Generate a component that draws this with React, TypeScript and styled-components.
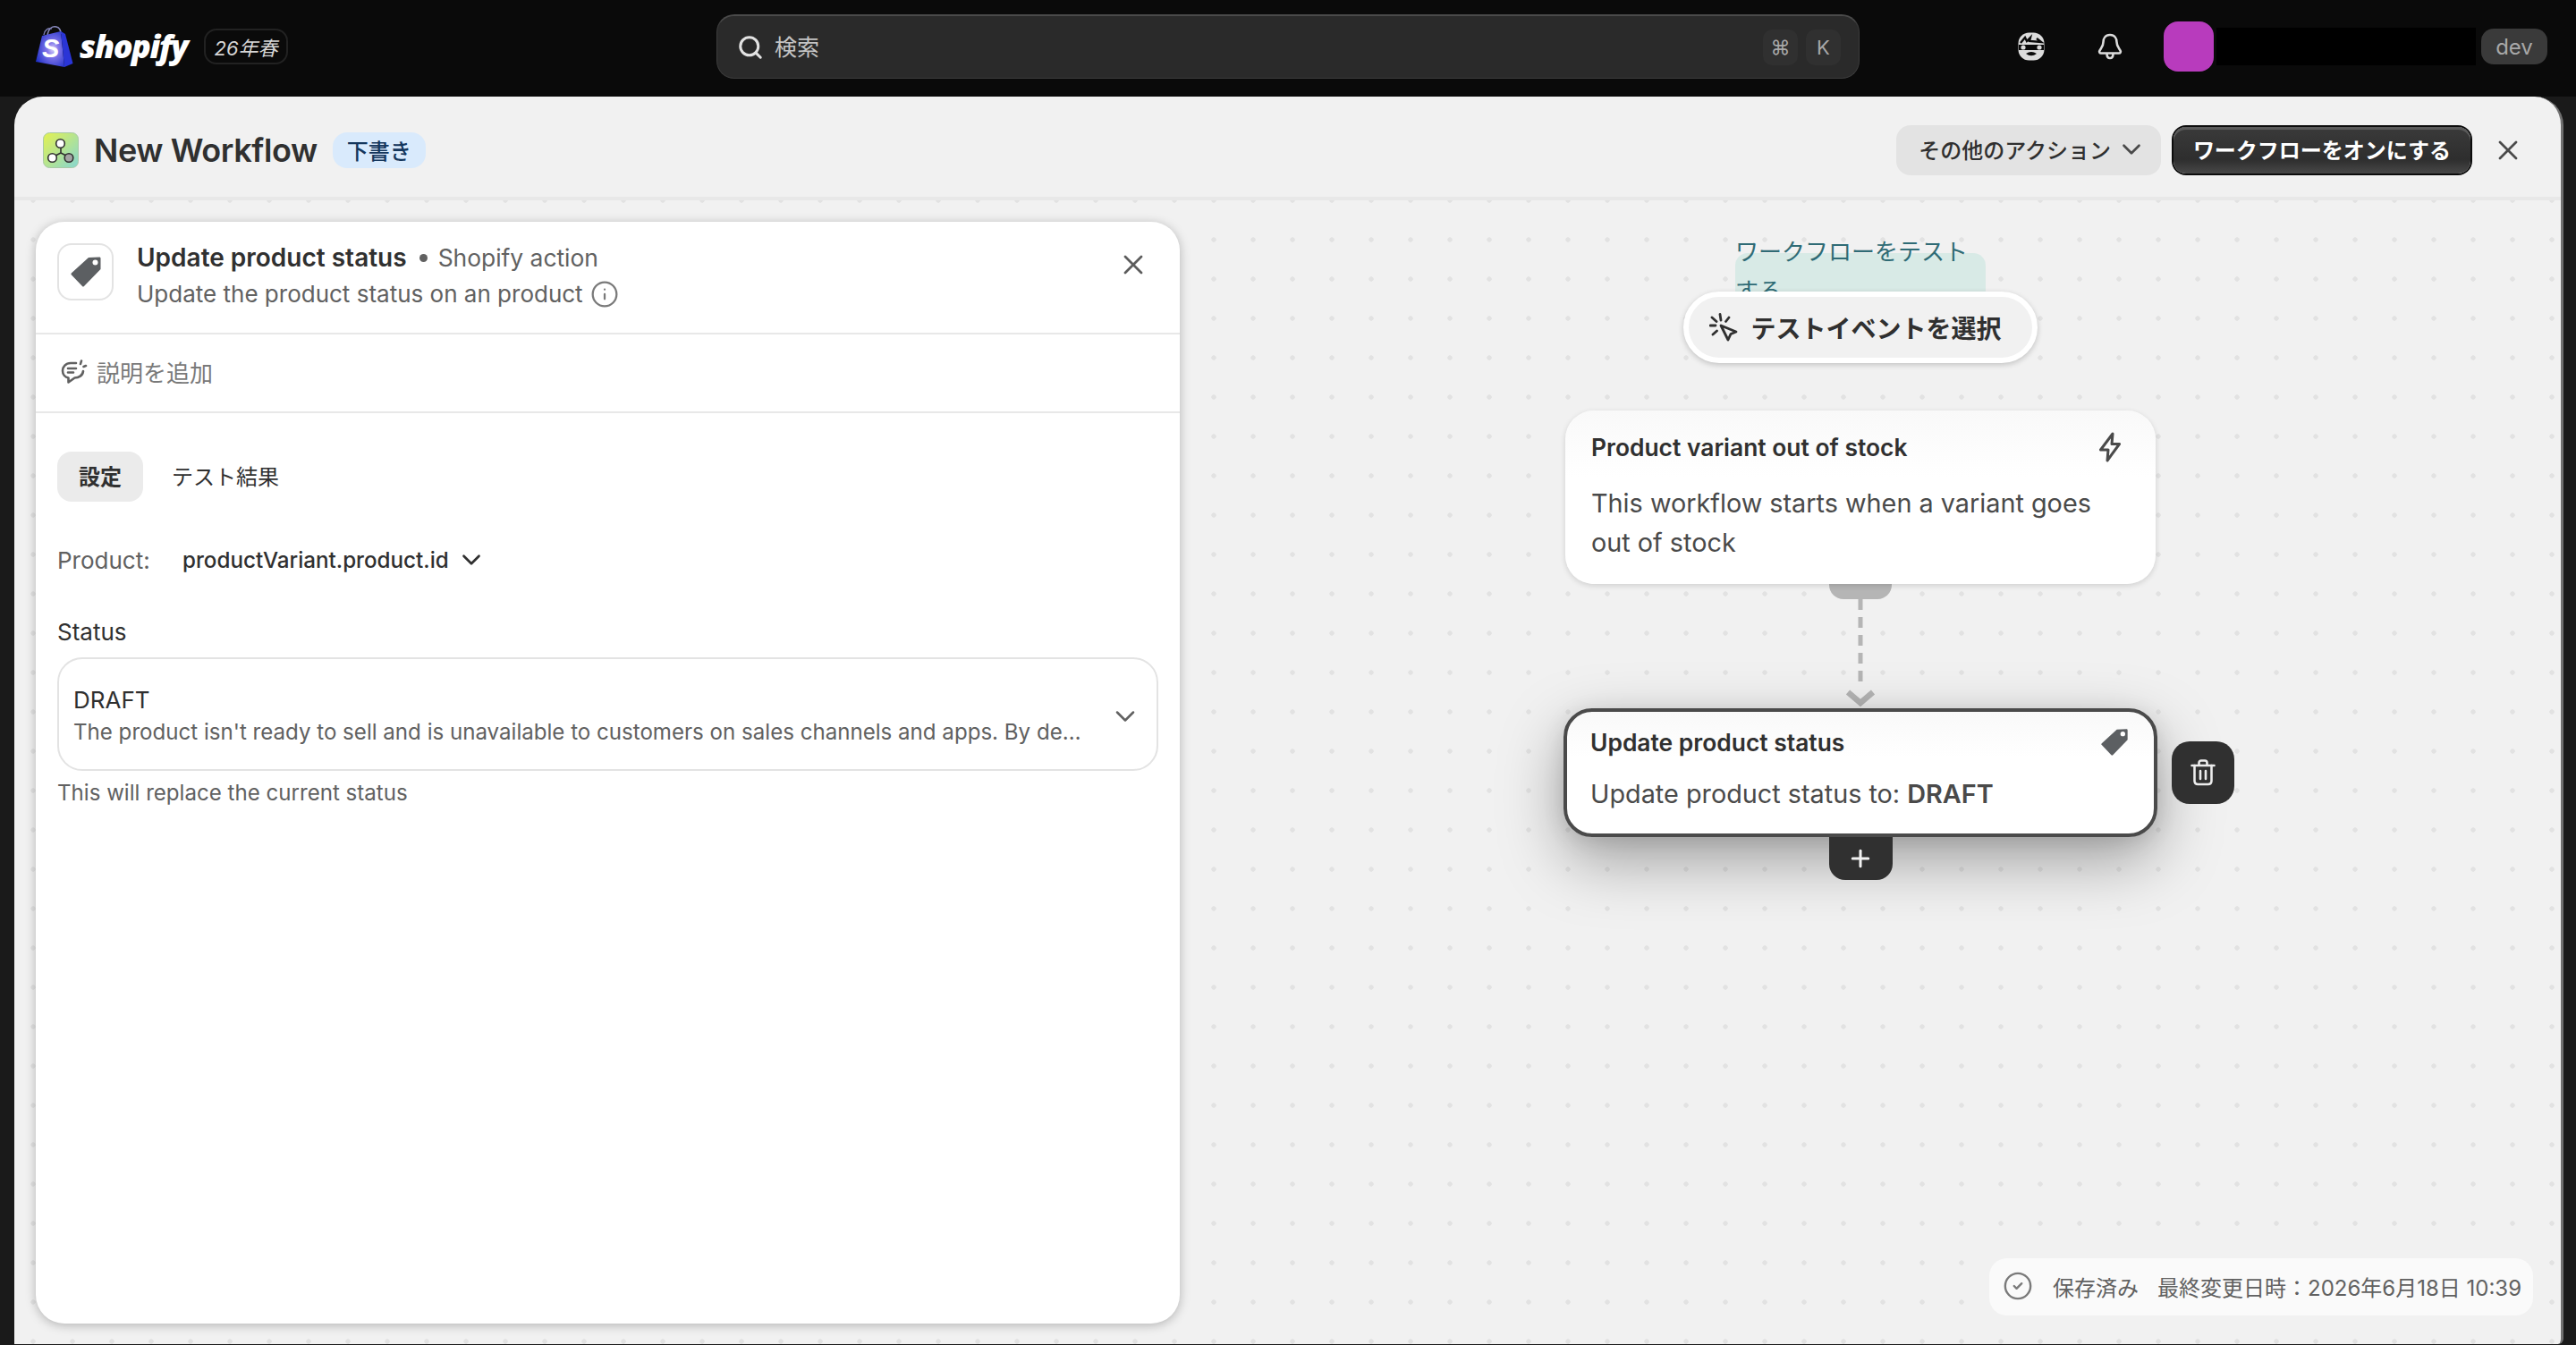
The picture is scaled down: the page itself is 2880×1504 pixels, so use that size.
import React from 'react';
import styled, { createGlobalStyle } from 'styled-components';
import { ChevronDown, CircleCheck, Info, Plus, Search, X } from 'lucide-react';

const GlobalStyle = createGlobalStyle`
    * {
        box-sizing: border-box;
    }
    html, body {
        margin: 0;
        padding: 0;
        height: 100%;
    }
    body {
        font-family: Inter, "Noto Sans CJK JP", sans-serif;
        color: #303030;
    }
`;

const Page = styled.div`
    display: flex;
    flex-direction: column;
    height: 100vh;
    overflow: hidden;
    background: #1a1a1a;
`;

/* top bar */
const TopBar = styled.header`
    display: grid;
    grid-template-columns: 801px 1278px 1fr;
    align-items: center;
    flex: 0 0 108px;
    height: 108px;
    padding-bottom: 4px;
    background: #0a0a0a;
`;
const Brand = styled.div`
    display: flex;
    align-items: center;
    padding-left: 40px;
`;
const Wordmark = styled.span`
    width: 128px;
    margin-left: 7px;
    margin-right: 11px;
    font-family: "Open Sans", "Liberation Sans", sans-serif;
    font-size: 36px;
    font-weight: 800;
    font-style: italic;
    letter-spacing: -1.4px;
    line-height: 48px;
    color: #fff;
`;
const EditionBadge = styled.span`
    display: flex;
    align-items: center;
    justify-content: center;
    width: 94px;
    height: 40px;
    border: 2px solid #222;
    border-radius: 14px;
    font-size: 22px;
    font-style: italic;
    color: #d6d6d6;
`;
const SearchBox = styled.div`
    display: flex;
    align-items: center;
    height: 72px;
    padding: 0 20px 0 22px;
    background: #2a2a2a;
    border: 1px solid #3c3c3c;
    border-top: 2px solid #4a4a4a;
    border-radius: 20px;
`;
const SearchText = styled.span`
    flex: 1;
    margin-left: 12px;
    padding-bottom: 3px;
    font-size: 25px;
    color: #c4c4c4;
`;
const Kbd = styled.kbd`
    display: flex;
    align-items: center;
    justify-content: center;
    width: 39px;
    height: 40px;
    margin-left: 9px;
    background: #303030;
    border-radius: 10px;
    font-family: Inter, "DejaVu Sans", sans-serif;
    font-size: 22px;
    color: #a8a8a8;
`;
const UserArea = styled.div`
    display: flex;
    align-items: center;
    padding-left: 177px;
`;
const BellSlot = styled.span`
    display: flex;
    margin-left: 59px;
    margin-right: 46px;
`;
const Avatar = styled.div`
    width: 56px;
    height: 56px;
    background: #b83bbd;
    border-radius: 16px;
`;
const RedactedName = styled.div`
    width: 290px;
    height: 42px;
    margin-left: 3px;
    background: #000;
`;
const EnvPill = styled.span`
    display: flex;
    align-items: center;
    justify-content: center;
    width: 74px;
    height: 40px;
    margin-left: 6px;
    background: #3a3a3a;
    border-radius: 14px;
    font-size: 24px;
    color: #a8a8a8;
`;

/* editor frame */
const Workspace = styled.div`
    flex: 1;
    display: flex;
    min-height: 0;
    padding: 0 14px 1px 16px;
`;
const EditorFrame = styled.main`
    flex: 1;
    display: flex;
    flex-direction: column;
    min-width: 0;
    background: #f1f1f1;
    border-right: 3px solid #707070;
    border-radius: 32px 32px 6px 0;
`;
const EditorHeader = styled.div`
    display: flex;
    align-items: center;
    flex: 0 0 116px;
    padding: 8px 41px 0 32px;
    border-bottom: 4px solid #e8e8e8;
`;
const WorkflowTitle = styled.h1`
    margin: 0 17px 0 17px;
    font-size: 36px;
    font-weight: 600;
    letter-spacing: -0.4px;
    line-height: 48px;
    color: #303030;
`;
const DraftBadge = styled.span`
    display: flex;
    align-items: center;
    justify-content: center;
    width: 104px;
    height: 40px;
    padding-bottom: 2px;
    background: #d9eafc;
    border-radius: 16px;
    font-size: 24px;
    font-weight: 500;
    color: #14365c;
`;
const HeaderActions = styled.div`
    display: flex;
    align-items: center;
    margin-left: auto;
`;
const SecondaryButton = styled.button`
    display: flex;
    align-items: center;
    gap: 6px;
    height: 56px;
    padding: 0 16px 3px 25px;
    background: #e3e3e3;
    border: 0;
    border-radius: 16px;
    font: 500 24px Inter, "Noto Sans CJK JP", sans-serif;
    color: #303030;
`;
const PrimaryButton = styled.button`
    display: flex;
    align-items: center;
    justify-content: center;
    width: 332px;
    height: 52px;
    margin: 0 24px 0 14px;
    padding: 0 0 3px;
    background: linear-gradient(#3a3a3a, #2e2e2e 70%, #484848);
    border: 0;
    border-radius: 14px;
    box-shadow: inset 0 3px 0 #5a5a5a, 0 0 0 2px #0c0c0c;
    font: 600 24px Inter, "Noto Sans CJK JP", sans-serif;
    color: #fff;
`;
const CloseButton = styled.span`
    display: flex;
    color: #4a4a4a;
`;

const Canvas = styled.div`
    position: relative;
    flex: 1;
    display: flex;
    min-height: 0;
    padding: 24px 24px 23px;
    background-image: radial-gradient(circle, #e2e2e2 2.4px, transparent 3px);
    background-size: 44px 44px;
    background-position: -1px -22px;
`;

/* config panel */
const SidePanel = styled.section`
    display: flex;
    flex-direction: column;
    width: 1279px;
    background: #fff;
    border-radius: 32px;
    box-shadow: 0 2px 12px rgba(0, 0, 0, 0.26);
`;
const PanelHead = styled.div`
    display: flex;
    flex: 0 0 126px;
    padding: 24px 34px 0 24px;
    border-bottom: 2px solid #e8e8e8;
`;
const ActionIconBox = styled.div`
    display: flex;
    align-items: center;
    justify-content: center;
    width: 63px;
    height: 64px;
    border: 2px solid #e3e3e3;
    border-radius: 16px;
`;
const HeadText = styled.div`
    flex: 1;
    margin: -4px 0 0 26px;
`;
const HeadTitleRow = styled.div`
    display: flex;
    align-items: center;
    font-size: 28px;
    line-height: 40px;
`;
const HeadTitle = styled.strong`
    font-weight: 600;
    color: #303030;
`;
const HeadDot = styled.span`
    width: 9px;
    height: 9px;
    margin: 0 12px 0 14px;
    background: #616161;
    border-radius: 50%;
`;
const HeadKind = styled.span`
    font-size: 26.4px;
    color: #616161;
`;
const HeadSubtitle = styled.div`
    display: flex;
    align-items: center;
    gap: 8px;
    margin-top: 1px;
    font-size: 26px;
    line-height: 40px;
    color: #616161;
`;
const PanelClose = styled.span`
    display: flex;
    height: 36px;
    margin-top: 6px;
    color: #5c5c5c;
`;
const DescribeRow = styled.div`
    display: flex;
    align-items: center;
    flex: 0 0 88px;
    gap: 10px;
    padding: 0 0 3px 28px;
    border-bottom: 2px solid #e8e8e8;
    font-size: 26px;
    color: #7a7a7a;
`;
const PanelBody = styled.div`
    padding: 43px 24px 0 24px;
`;
const Tabs = styled.div`
    display: flex;
    gap: 32px;
    margin-bottom: 45px;
`;
const Tab = styled.div<{ $active?: boolean }>`
    display: flex;
    align-items: center;
    justify-content: center;
    height: 56px;
    padding: ${(p) => (p.$active ? '0 24px 4px' : '0 0 4px')};
    background: ${(p) => (p.$active ? '#ebebeb' : 'transparent')};
    border-radius: 16px;
    font-size: 24px;
    font-weight: ${(p) => (p.$active ? 600 : 400)};
    color: #303030;
`;
const ProductRow = styled.div`
    display: flex;
    align-items: center;
    height: 40px;
    margin-bottom: 41px;
    font-size: 26px;
`;
const ProductLabel = styled.span`
    width: 140px;
    color: #616161;
`;
const ProductValue = styled.span`
    display: flex;
    align-items: center;
    gap: 8px;
    font-size: 24.2px;
    font-weight: 500;
    color: #303030;
`;
const FieldLabel = styled.div`
    margin-bottom: 8px;
    font-size: 26px;
    line-height: 40px;
    color: #303030;
`;
const SelectBox = styled.div`
    display: flex;
    align-items: center;
    height: 127px;
    padding: 4px 17px 0 16px;
    border: 2px solid #e3e3e3;
    border-radius: 28px;
`;
const SelectText = styled.div`
    flex: 1;
    min-width: 0;
`;
const SelectValue = styled.div`
    font-size: 26px;
    line-height: 36px;
    color: #303030;
`;
const SelectDescription = styled.div`
    overflow: hidden;
    white-space: nowrap;
    text-overflow: ellipsis;
    margin-right: 28px;
    font-size: 24.1px;
    line-height: 36px;
    color: #616161;
`;
const HelpText = styled.div`
    margin-top: 6px;
    font-size: 24.1px;
    line-height: 38px;
    color: #616161;
`;

/* flow diagram */
const FlowColumn = styled.div`
    position: absolute;
    top: 59px;
    left: 1732px;
    display: flex;
    flex-direction: column;
    align-items: center;
    width: 664px;
`;
const TestNote = styled.div`
    width: 280px;
    height: 60px;
    background: #d8eae6;
    border-radius: 14px 14px 0 0;
    font-size: 26px;
    line-height: 44px;
    color: #2f6b75;
`;
const TestNoteText = styled.div`
    margin-top: -23px;
`;
const TestButton = styled.button`
    position: relative;
    display: flex;
    align-items: center;
    justify-content: center;
    gap: 14px;
    width: 396px;
    height: 80px;
    margin-top: -17px;
    padding: 0 11px 0 0;
    background: #f1f1f1;
    border: 6px solid #fff;
    border-radius: 40px;
    box-shadow: 0 2px 6px rgba(0, 0, 0, 0.2);
    font: 600 28px Inter, "Noto Sans CJK JP", sans-serif;
    color: #303030;
`;
const NodeCard = styled.article<{ $selected?: boolean }>`
    position: relative;
    width: ${(p) => (p.$selected ? '664px' : '660px')};
    height: ${(p) => (p.$selected ? '144px' : '194px')};
    padding: ${(p) => (p.$selected ? '14px 28px 0 26px' : '21px 38px 0 29px')};
    background: linear-gradient(#f9f9f9, #fff 38%);
    border: ${(p) => (p.$selected ? '4px solid #4a4a4a' : '0')};
    border-radius: 32px;
    box-shadow: ${(p) =>
        p.$selected
            ? '0 26px 70px 0 rgba(0, 0, 0, 0.34), 0 4px 24px rgba(0, 0, 0, 0.1)'
            : '0 2px 6px rgba(0, 0, 0, 0.14)'};
`;
const TriggerSpacing = styled.div`
    height: 53px;
`;
const NodeHead = styled.div`
    display: flex;
    align-items: center;
    justify-content: space-between;
    height: 40px;
    font-size: 26.4px;
    font-weight: 600;
    color: #303030;
`;
const NodeBody = styled.div<{ $selected?: boolean }>`
    margin-top: ${(p) => (p.$selected ? '16px' : '21px')};
    font-size: 28.8px;
    line-height: 44px;
    color: #4a4a4a;
`;
const Strong = styled.b`
    font-weight: 600;
`;
const Stub = styled.div`
    width: 70px;
    height: 17px;
    background: #b5b5b5;
    border-radius: 0 0 16px 16px;
`;
const Connector = styled.svg`
    display: block;
    height: 122px;
`;
const AddHandle = styled.div`
    position: relative;
    display: flex;
    align-items: center;
    justify-content: center;
    width: 71px;
    height: 48px;
    background: #303030;
    border-radius: 0 0 18px 18px;
    color: #f1f1f1;
`;
const DeleteButton = styled.div`
    position: absolute;
    top: 33px;
    left: calc(100% + 20px);
    display: flex;
    align-items: center;
    justify-content: center;
    width: 70px;
    height: 70px;
    background: #303030;
    border-radius: 20px;
`;
const SaveStatus = styled.div`
    position: absolute;
    right: 31px;
    bottom: 32px;
    display: flex;
    align-items: center;
    width: 608px;
    height: 64px;
    padding: 0 0 2px 15px;
    background: #fafafa;
    border-radius: 20px;
    font-size: 24px;
    color: #616161;
`;
const SavedLabel = styled.span`
    margin: 0 21px 0 22px;
`;

const TagIcon: React.FC<{ size: number }> = ({ size }) => (
    <svg width={size} height={size} viewBox="0 0 36 36">
        <path
            d="M21 2 L33 1.5 C34 1.5 34.5 2 34.5 3 L34.5 15 L16 34 C15.3 34.7 14.6 34.7 14 34 L2 21.5 C1.3 20.8 1.3 20 2 19.3 Z"
            fill="#5c5f62"
        />
        <circle cx="28.5" cy="7.5" r="3" fill="#fff" />
    </svg>
);

const ShopifyBag = () => (
    <svg width="42" height="48" viewBox="0 0 42 48">
        <defs>
            <radialGradient id="bagGlow" cx="0.6" cy="0.5" r="0.65">
                <stop offset="0" stopColor="#dcd2fa" />
                <stop offset="0.3" stopColor="#8478ea" />
                <stop offset="1" stopColor="#1f30c8" />
            </radialGradient>
        </defs>
        <path d="M13 12 C14 3 19 1 23 2 C27 3 28 7 28 10" fill="none" stroke="#8b8cc0" strokeWidth="1.6" />
        <path d="M9 11 C10 5 14 3 18 4" fill="none" stroke="#7a7bb0" strokeWidth="1.4" />
        <path d="M7 12 L28 7 L32 47 L0 41 Z" fill="url(#bagGlow)" />
        <path d="M28 7 L33 10 L41.5 43 L32 47 Z" fill="#2a35d6" />
        <text x="7" y="36" fontFamily="Liberation Sans, sans-serif" fontSize="29" fontWeight="700" fontStyle="italic" fill="#fff">
            S
        </text>
    </svg>
);

const SidekickFace = () => (
    <svg width="30" height="32" viewBox="0 0 30 32">
        <rect x="0.5" y="0.5" width="29" height="31" rx="12" fill="#dcdcdc" />
        <path d="M3 12 L8 6 L10 10 L14 6 L13 10 L26 11 L21 7" fill="none" stroke="#0a0a0a" strokeWidth="2.4" />
        <path d="M1 17 H29" stroke="#0a0a0a" strokeWidth="6" />
        <circle cx="6" cy="17" r="2.6" fill="#dcdcdc" />
        <circle cx="24" cy="17" r="2.6" fill="#dcdcdc" />
        <path d="M9 24 Q15 20 21 24 Q15 28.5 9 24 Z" fill="#0a0a0a" />
    </svg>
);

const BellIcon = () => (
    <svg width="28" height="30" viewBox="0 0 28 30" fill="none" stroke="#dcdcdc" strokeWidth="2.6" strokeLinejoin="round">
        <path d="M14 2 C8.5 2 6.5 6.5 6.5 10 C6.5 15 4 17 2.5 19.5 C1.5 21 2.5 22.5 4 22.5 H24 C25.5 22.5 26.5 21 25.5 19.5 C24 17 21.5 15 21.5 10 C21.5 6.5 19.5 2 14 2 Z" />
        <path d="M10.5 23 C10.5 26.5 12 28 14 28 C16 28 17.5 26.5 17.5 23" />
    </svg>
);

const WorkflowAppIcon = () => (
    <svg width="40" height="40" viewBox="0 0 40 40">
        <defs>
            <linearGradient id="appTile" x1="0" y1="0" x2="1" y2="1">
                <stop offset="0" stopColor="#e4f24f" />
                <stop offset="1" stopColor="#86d6d2" />
            </linearGradient>
        </defs>
        <rect x="0.5" y="0.5" width="39" height="39" rx="7" fill="url(#appTile)" stroke="#a9c9a6" />
        <path d="M20 17 V23 L12 27 M20 23 L28 27" fill="none" stroke="#303030" strokeWidth="1.6" />
        <circle cx="19.5" cy="12.5" r="4.8" fill="#fff" stroke="#303030" strokeWidth="1.6" />
        <circle cx="10.5" cy="28.5" r="4.8" fill="#fff" stroke="#303030" strokeWidth="1.6" />
        <circle cx="29" cy="28.5" r="4.8" fill="#a4a4a4" stroke="#303030" strokeWidth="1.6" />
    </svg>
);

const NoteSparkIcon = () => (
    <svg width="30" height="28" viewBox="0 0 30 28" fill="none" stroke="#616161" strokeWidth="2.6" strokeLinecap="round" strokeLinejoin="round">
        <path d="M17 4 H11 C5.5 4 2 8 2 12.5 C2 17 5 20 8.5 20.5 V25.5 L15.5 20.5 C20 20.5 24.5 18 25 13" />
        <path d="M8 10 H17 M8 14.5 H14" />
        <path d="M23 1.5 L22 5 M28 7 L25.5 8" />
    </svg>
);

const ClickIcon = () => (
    <svg width="32" height="32" viewBox="0 0 32 32" fill="none" stroke="#303030" strokeWidth="2.8" strokeLinecap="round" strokeLinejoin="round">
        <path d="M13 14 L30 21 L24 23.5 L21 30 Z" />
        <path d="M12 1.5 L13 8 M3 5 L8 9.5 M22 5 L18.5 9.5 M1 14 L7 14 M4 24 L8.5 20" />
    </svg>
);

const BoltIcon = () => (
    <svg width="26" height="34" viewBox="0 0 26 34" fill="none" stroke="#4a4a4a" strokeWidth="3" strokeLinejoin="round">
        <path d="M16 2 L2.5 20 H11 L10 32 L23.5 13.5 H15 Z" />
    </svg>
);

const TrashIcon = () => (
    <svg width="28" height="30" viewBox="0 0 28 30" fill="none" stroke="#ececec" strokeWidth="2.6" strokeLinecap="round" strokeLinejoin="round">
        <path d="M1.5 7 H26.5 M9.5 6.5 V4 C9.5 2.5 10.5 1.5 12 1.5 H16 C17.5 1.5 18.5 2.5 18.5 4 V6.5" />
        <path d="M4.5 7 V24 C4.5 26.5 6 28 8.5 28 H19.5 C22 28 23.5 26.5 23.5 24 V7" />
        <path d="M11 13 V22 M17 13 V22" />
    </svg>
);

export default function App() {
    return (
        <Page>
            <GlobalStyle />
            <TopBar>
                <Brand>
                    <ShopifyBag />
                    <Wordmark>shopify</Wordmark>
                    <EditionBadge>26年春</EditionBadge>
                </Brand>
                <SearchBox>
                    <Search size={30} color="#e3e3e3" strokeWidth={2.4} />
                    <SearchText>検索</SearchText>
                    <Kbd>⌘</Kbd>
                    <Kbd>K</Kbd>
                </SearchBox>
                <UserArea>
                    <SidekickFace />
                    <BellSlot>
                        <BellIcon />
                    </BellSlot>
                    <Avatar />
                    <RedactedName />
                    <EnvPill>dev</EnvPill>
                </UserArea>
            </TopBar>
            <Workspace>
                <EditorFrame>
                    <EditorHeader>
                        <WorkflowAppIcon />
                        <WorkflowTitle>New Workflow</WorkflowTitle>
                        <DraftBadge>下書き</DraftBadge>
                        <HeaderActions>
                            <SecondaryButton>
                                その他のアクション
                                <ChevronDown size={34} strokeWidth={1.9} color="#4a4a4a" />
                            </SecondaryButton>
                            <PrimaryButton>ワークフローをオンにする</PrimaryButton>
                            <CloseButton>
                                <X size={36} strokeWidth={1.8} />
                            </CloseButton>
                        </HeaderActions>
                    </EditorHeader>
                    <Canvas>
                        <SidePanel>
                            <PanelHead>
                                <ActionIconBox>
                                    <TagIcon size={36} />
                                </ActionIconBox>
                                <HeadText>
                                    <HeadTitleRow>
                                        <HeadTitle>Update product status</HeadTitle>
                                        <HeadDot />
                                        <HeadKind>Shopify action</HeadKind>
                                    </HeadTitleRow>
                                    <HeadSubtitle>
                                        Update the product status on an product
                                        <Info size={32} strokeWidth={1.7} color="#7a7a7a" />
                                    </HeadSubtitle>
                                </HeadText>
                                <PanelClose>
                                    <X size={36} strokeWidth={1.8} />
                                </PanelClose>
                            </PanelHead>
                            <DescribeRow>
                                <NoteSparkIcon />
                                説明を追加
                            </DescribeRow>
                            <PanelBody>
                                <Tabs>
                                    <Tab $active>設定</Tab>
                                    <Tab>テスト結果</Tab>
                                </Tabs>
                                <ProductRow>
                                    <ProductLabel>Product:</ProductLabel>
                                    <ProductValue>
                                        productVariant.product.id
                                        <ChevronDown size={34} strokeWidth={1.9} color="#303030" />
                                    </ProductValue>
                                </ProductRow>
                                <FieldLabel>Status</FieldLabel>
                                <SelectBox>
                                    <SelectText>
                                        <SelectValue>DRAFT</SelectValue>
                                        <SelectDescription>
                                            The product isn't ready to sell and is unavailable to customers on sales
                                            channels and apps. By default, new products are drafts.
                                        </SelectDescription>
                                    </SelectText>
                                    <ChevronDown size={36} strokeWidth={1.7} color="#616161" />
                                </SelectBox>
                                <HelpText>This will replace the current status</HelpText>
                            </PanelBody>
                        </SidePanel>

                        <FlowColumn>
                            <TestNote>
                                <TestNoteText>ワークフローをテストする</TestNoteText>
                            </TestNote>
                            <TestButton>
                                <ClickIcon />
                                テストイベントを選択
                            </TestButton>
                            <TriggerSpacing />
                            <NodeCard>
                                <NodeHead>
                                    Product variant out of stock
                                    <BoltIcon />
                                </NodeHead>
                                <NodeBody>This workflow starts when a variant goes out of stock</NodeBody>
                            </NodeCard>
                            <Stub />
                            <Connector width="40" viewBox="0 0 40 122" fill="none" stroke="#b5b5b5" strokeWidth="5">
                                <path d="M20 0 V98" strokeDasharray="12 8" />
                                <path d="M6 104 L20 116 L34 104" strokeWidth="6.5" />
                            </Connector>
                            <NodeCard $selected>
                                <NodeHead>
                                    Update product status
                                    <TagIcon size={32} />
                                </NodeHead>
                                <NodeBody $selected>
                                    Update product status to: <Strong>DRAFT</Strong>
                                </NodeBody>
                                <DeleteButton>
                                    <TrashIcon />
                                </DeleteButton>
                            </NodeCard>
                            <AddHandle>
                                <Plus size={30} strokeWidth={2.4} />
                            </AddHandle>
                        </FlowColumn>

                        <SaveStatus>
                            <CircleCheck size={34} strokeWidth={1.7} color="#7a7a7a" />
                            <SavedLabel>保存済み</SavedLabel>
                            最終変更日時：2026年6月18日 10:39
                        </SaveStatus>
                    </Canvas>
                </EditorFrame>
            </Workspace>
        </Page>
    );
}
